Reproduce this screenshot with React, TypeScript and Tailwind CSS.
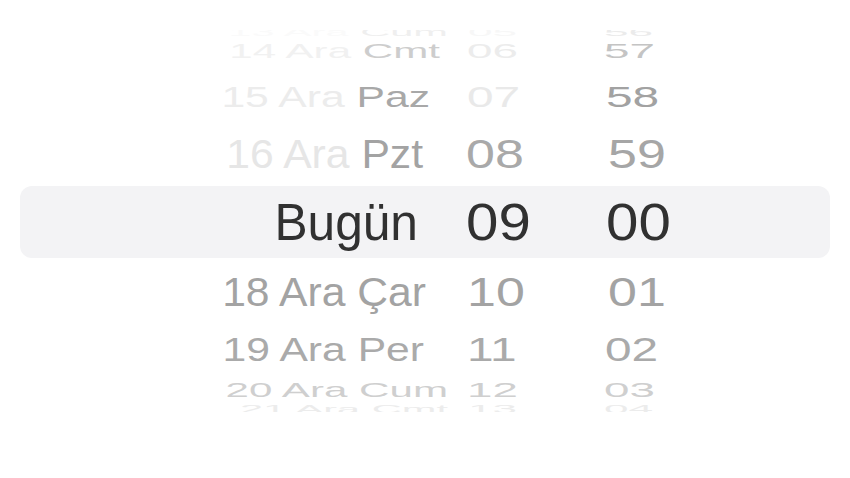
type WheelRow = {
  date: string;
  day: string;
  hour: string;
  min: string;
  h: number;
  dy: number;
  sy: number;
  sxd: number;
  sxn: number;
  dxd: number;
  dxh: number;
  dxm: number;
  cDate: string;
  cDay: string;
  cHour: string;
  cMin: string;
};

const above: WheelRow[] = [
  { date: '13 Ara', day: 'Cum', hour: '05', min: '56', h: 12, dy: -4, sy: 0.2, sxd: 0.8, sxn: 0.85, dxd: 30, dxh: 2, dxm: -2, cDate: '#fafafa', cDay: '#efefef', cHour: '#f7f7f7', cMin: '#ebebeb' },
  { date: '14 Ara', day: 'Cmt', hour: '06', min: '57', h: 32, dy: -7, sy: 0.38, sxd: 0.81, sxn: 0.88, dxd: 22, dxh: 1, dxm: -2, cDate: '#f1f1f1', cDay: '#cdcdcd', cHour: '#ececec', cMin: '#c4c4c4' },
  { date: '15 Ara', day: 'Paz', hour: '07', min: '58', h: 50, dy: -2, sy: 0.57, sxd: 0.82, sxn: 0.92, dxd: 12, dxh: 1, dxm: 0, cDate: '#ececec', cDay: '#a8a8a8', cHour: '#e9e9e9', cMin: '#a2a2a2' },
  { date: '16 Ara', day: 'Pzt', hour: '08', min: '59', h: 62, dy: -1, sy: 0.77, sxd: 0.82, sxn: 1.0, dxd: 5, dxh: 0, dxm: 2, cDate: '#e6e6e6', cDay: '#a3a3a3', cHour: '#a9a9a9', cMin: '#a6a6a6' },
];

const below: WheelRow[] = [
  { date: '18 Ara', day: 'Çar', hour: '10', min: '01', h: 64, dy: 2, sy: 0.78, sxd: 0.82, sxn: 1.0, dxd: 8, dxh: 1, dxm: 2, cDate: '#a3a3a3', cDay: '#a3a3a3', cHour: '#a3a3a3', cMin: '#a3a3a3' },
  { date: '19 Ara', day: 'Per', hour: '11', min: '02', h: 50, dy: 2, sy: 0.64, sxd: 0.82, sxn: 0.92, dxd: 6, dxh: 1, dxm: -1, cDate: '#aaaaaa', cDay: '#aaaaaa', cHour: '#aaaaaa', cMin: '#aaaaaa' },
  { date: '20 Ara', day: 'Cum', hour: '12', min: '03', h: 28, dy: 4, sy: 0.38, sxd: 0.81, sxn: 0.88, dxd: 30, dxh: 1, dxm: -2, cDate: '#cfcfcf', cDay: '#cfcfcf', cHour: '#cfcfcf', cMin: '#cfcfcf' },
  { date: '21 Ara', day: 'Cmt', hour: '13', min: '04', h: 12, dy: 3, sy: 0.2, sxd: 0.8, sxn: 0.85, dxd: 30, dxh: 2, dxm: -2, cDate: '#ececec', cDay: '#ececec', cHour: '#ececec', cMin: '#ececec' },
];

// one wheel row; scale/offset come from the row data to fake the drum curve
function Row({ r }: { r: WheelRow }) {
  return (
    <div className="flex items-center" style={{ height: r.h }}>
      <div
        className="w-[418px] shrink-0 text-right origin-right"
        style={{ transform: `translate(${r.dxd}px, ${r.dy}px) scale(${r.sxd}, ${r.sy})` }}
      >
        <span style={{ color: r.cDate }}>{r.date} </span>
        <span style={{ color: r.cDay }}>{r.day}</span>
      </div>
      <div
        className="ml-[48px] w-[140px] shrink-0 origin-left"
        style={{ color: r.cHour, transform: `translate(${r.dxh}px, ${r.dy}px) scale(${r.sxn}, ${r.sy})` }}
      >
        {r.hour}
      </div>
      <div
        className="w-[140px] shrink-0 origin-left"
        style={{ color: r.cMin, transform: `translate(${r.dxm}px, ${r.dy}px) scale(${r.sxn}, ${r.sy})` }}
      >
        {r.min}
      </div>
    </div>
  );
}

export default function App() {
  return (
    <div className="h-[478px] w-[850px] overflow-hidden bg-white font-['Liberation_Sans',Arial,sans-serif] text-[52px] leading-none whitespace-nowrap">
      <div className="mt-[30px] flex h-[382px] flex-col overflow-hidden">
        {above.map((r) => (
          <Row key={r.date} r={r} />
        ))}
        <div className="mx-5 flex h-[72px] shrink-0 items-center rounded-xl bg-[#f3f3f5] text-[#313131]">
          <div className="w-[398px] shrink-0 origin-right scale-x-[0.955] text-right">Bugün</div>
          <div className="ml-[48px] w-[140px] shrink-0 origin-left scale-x-[1.12]">09</div>
          <div className="w-[140px] shrink-0 origin-left scale-x-[1.12]">00</div>
        </div>
        {below.map((r) => (
          <Row key={r.date} r={r} />
        ))}
      </div>
    </div>
  );
}
